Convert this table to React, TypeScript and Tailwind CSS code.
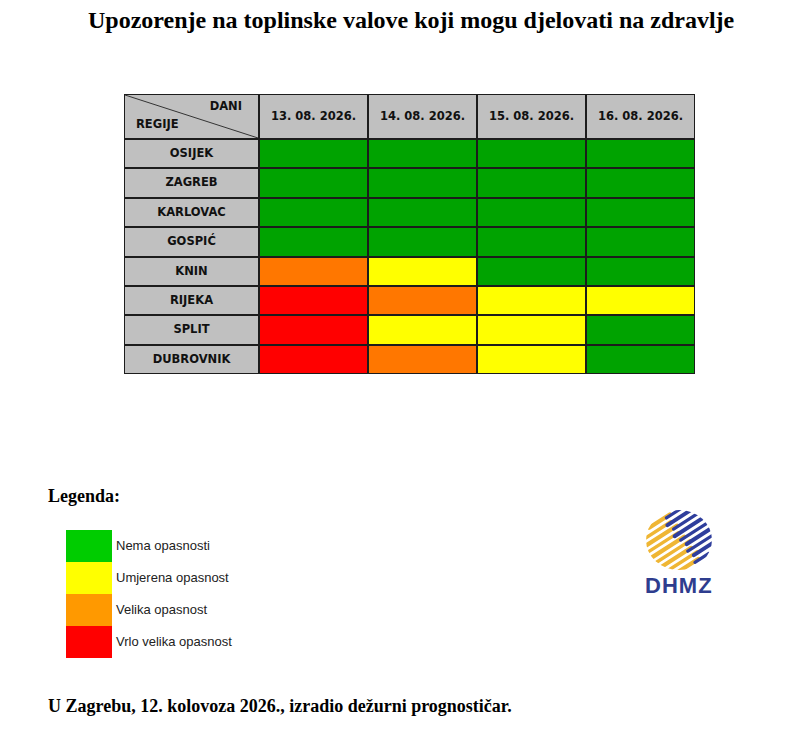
const G = "bg-[#00a300]";
const Y = "bg-[#ffff00]";
const O = "bg-[#ff7700]";
const R = "bg-[#ff0000]";

const days = ["13. 08. 2026.", "14. 08. 2026.", "15. 08. 2026.", "16. 08. 2026."];

const rows: { name: string; cells: string[] }[] = [
  { name: "OSIJEK", cells: [G, G, G, G] },
  { name: "ZAGREB", cells: [G, G, G, G] },
  { name: "KARLOVAC", cells: [G, G, G, G] },
  { name: "GOSPIĆ", cells: [G, G, G, G] },
  { name: "KNIN", cells: [O, Y, G, G] },
  { name: "RIJEKA", cells: [R, O, Y, Y] },
  { name: "SPLIT", cells: [R, Y, Y, G] },
  { name: "DUBROVNIK", cells: [R, O, Y, G] },
];

const legend = [
  { color: "bg-[#00cc00]", label: "Nema opasnosti" },
  { color: "bg-[#ffff00]", label: "Umjerena opasnost" },
  { color: "bg-[#ff9900]", label: "Velika opasnost" },
  { color: "bg-[#ff0000]", label: "Vrlo velika opasnost" },
];

function WarningTable() {
  return (
    <div className="ml-[124px] grid w-[571px] grid-cols-[133px_107px_107px_107px_107px] grid-rows-[43px_repeat(8,27.375px)] gap-[2px] bg-[#1c1c1c] p-[1px] font-['DejaVu_Sans',sans-serif] text-[11.5px] font-bold text-[#111]">
      <div className="relative bg-[#c0c0c0]">
        <svg className="absolute inset-0 h-full w-full" viewBox="0 0 133 43" preserveAspectRatio="none">
          <line x1="0" y1="0" x2="133" y2="43" stroke="#333" strokeWidth="1" />
        </svg>
        <span className="absolute right-[16px] top-[3px]">DANI</span>
        <span className="absolute bottom-[5px] left-[11px]">REGIJE</span>
      </div>
      {days.map((d) => (
        <div key={d} className="flex items-center justify-center bg-[#c0c0c0]">
          {d}
        </div>
      ))}
      {rows.map((r) => (
        <>
          <div key={r.name} className="flex items-center justify-center bg-[#c0c0c0]">
            {r.name}
          </div>
          {r.cells.map((c, i) => (
            <div key={r.name + i} className={c} />
          ))}
        </>
      ))}
    </div>
  );
}

function Logo() {
  // diagonal brush streaks inside a rough circle, yellow on the left, blue on the right
  const cx = 38;
  const cy = 30;
  const dx = 0.84;
  const dy = -0.54;
  const ks = [-4, -3, -2, -1, 0, 1, 2, 3, 4];
  return (
    <div className="flex w-[76px] flex-col items-center">
      <svg width="76" height="62" viewBox="0 0 76 62">
        <defs>
          <clipPath id="cp">
            <ellipse cx={cx} cy={cy} rx="33" ry="30" />
          </clipPath>
        </defs>
        <g clipPath="url(#cp)" strokeLinecap="round" fill="none">
          {ks.map((k) => {
            const ox = cx + 0.54 * 6.6 * k;
            const oy = cy + 0.84 * 6.6 * k;
            const split = 6 + (k % 2) * 3;
            const len = Math.sqrt(Math.max(0, 30 * 30 - 43 * k * k)) + 4;
            return (
              <g key={k}>
                <line
                  x1={ox - dx * len}
                  y1={oy - dy * len}
                  x2={ox + dx * split}
                  y2={oy + dy * split}
                  stroke="#efb634"
                  strokeWidth={k % 2 ? 3.4 : 4.2}
                />
                <line
                  x1={ox + dx * (split - 4)}
                  y1={oy + dy * (split - 4) + 1.2}
                  x2={ox + dx * len}
                  y2={oy + dy * len + 1.2}
                  stroke="#2f3e9c"
                  strokeWidth={k % 2 ? 4 : 3.2}
                />
              </g>
            );
          })}
        </g>
      </svg>
      <div className="mt-[3px] font-['Liberation_Sans',Arial,sans-serif] text-[22px] font-bold leading-none tracking-[1px] text-[#2e3d8e]">
        DHMZ
      </div>
    </div>
  );
}

export default function App() {
  return (
    <div className="relative h-[747px] w-[791px] bg-white font-['Liberation_Serif','Times_New_Roman',serif] text-black">
      <h1 className="whitespace-nowrap pl-[88px] pt-[6px] text-[24px] font-bold leading-[28px]">
        Upozorenje na toplinske valove koji mogu djelovati na zdravlje
      </h1>
      <div className="mt-[60px]">
        <WarningTable />
      </div>
      <div className="mt-[112px] flex items-start">
        <div className="pl-[48px]">
          <div className="text-[18px] font-bold leading-[20px]">Legenda:</div>
          <div className="ml-[18px] mt-[24px] flex flex-col">
            {legend.map((l) => (
              <div key={l.label} className="flex h-[32px] items-center">
                <div className={`h-full w-[46px] ${l.color}`} />
                <span className="ml-[4px] font-['Liberation_Sans',Arial,sans-serif] text-[13px] text-[#222]">
                  {l.label}
                </span>
              </div>
            ))}
          </div>
        </div>
        <div className="ml-[409px] mt-[24px]">
          <Logo />
        </div>
      </div>
      <div className="mt-[38px] pl-[48px] text-[18px] font-bold leading-[20px]">
        U Zagrebu, 12. kolovoza 2026., izradio dežurni prognostičar.
      </div>
    </div>
  );
}
